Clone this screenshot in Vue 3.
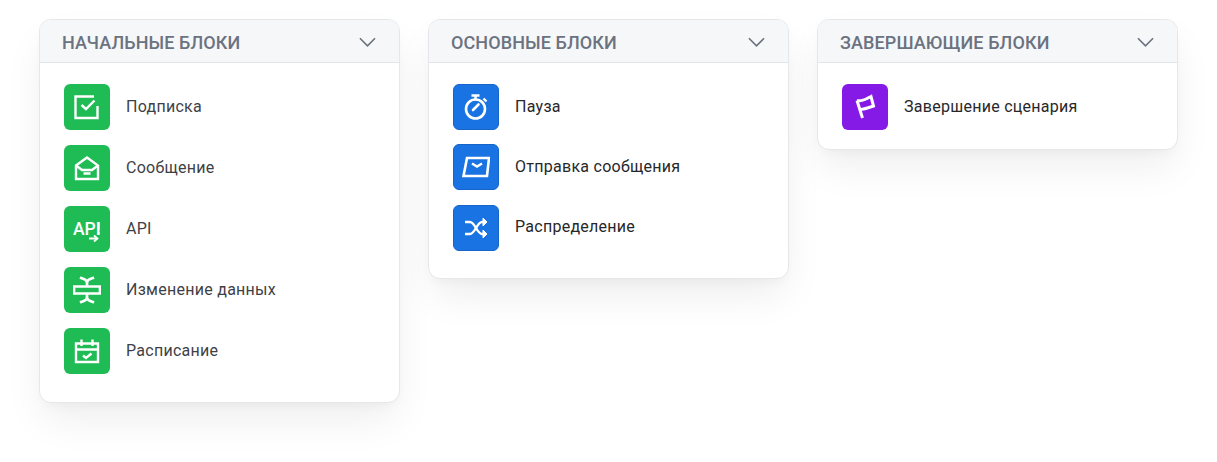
<template>
  <div class="blocks-page">
    <section v-for="group in groups" :key="group.title" class="block-card" :class="group.cls">
      <header class="card-head">
        <span class="card-title">{{ group.title }}</span>
        <svg class="chevron" width="17" height="10" viewBox="0 0 18 10" fill="none">
          <path d="M1 1 L9 9 L17 1" stroke="#6b7280" stroke-width="1.7" />
        </svg>
      </header>
      <div class="card-body">
        <div v-for="item in group.items" :key="item.name" class="block-item">
          <div class="block-icon" :class="group.color">
            <svg width="28" height="28" viewBox="0 0 28 28" fill="none" stroke="#fff" stroke-width="2.4">
              <template v-if="item.icon === 'check'">
                <path d="M21 3.5 H2.5 V25 H24.5 V13" />
                <path d="M8.5 12 L13 16 L21.5 7.5" />
              </template>
              <template v-else-if="item.icon === 'mail'">
                <path d="M3 11.5 L14 3.5 L25 11.5 V25 H3 Z" />
                <path d="M3 11.5 L9 16 H19 L25 11.5" />
                <path d="M10.5 19.5 H17.5" />
              </template>
              <template v-else-if="item.icon === 'api'">
                <text x="0" y="19.5" class="api-text" fill="#fff" stroke="none">API</text>
                <path d="M25.5 7 V15" stroke-width="2" />
                <path d="M25.5 17 V19.4" stroke-width="2" />
                <path d="M16 23.5 H24" stroke-width="2" />
                <path d="M21 20.5 L24.5 23.5 L21 26.5" stroke-width="1.8" />
              </template>
              <template v-else-if="item.icon === 'data'">
                <g stroke-width="2.7">
                  <path d="M7 1.5 C10 3 14 3 14 6.5 V10.5 M21 1.5 C18 3 14 3 14 6.5" />
                  <path d="M7 26.5 C10 25 14 25 14 21.5 V17.5 M21 26.5 C18 25 14 25 14 21.5" />
                  <path d="M1 10.5 H27 V17.5 H1 Z" />
                </g>
              </template>
              <template v-else-if="item.icon === 'calendar'">
                <path d="M3 6.5 H25 V25 H3 Z" />
                <path d="M3 12.5 H25" />
                <path d="M8.5 2.5 V9 M19.5 2.5 V9" />
                <path d="M10 18.5 L13 21 L18.5 16.5" />
              </template>
              <template v-else-if="item.icon === 'timer'">
                <circle cx="13.5" cy="16" r="9.5" stroke-width="2.6" />
                <path d="M9.5 2.5 H17.5 M13.5 2.5 V6" />
                <path d="M21.5 5.5 L24.5 8.5" />
                <path d="M11 17 L16.5 11.5" stroke-linecap="round" stroke-width="2.6" />
              </template>
              <template v-else-if="item.icon === 'send'">
                <path d="M5 5 H27 L25 23 H1.5 Z" stroke-width="2.6" />
                <path d="M10 10.5 L15 13.5 L20 10.5" />
              </template>
              <template v-else-if="item.icon === 'shuffle'">
                <path d="M3 8 H8 C13 8 15 20 20 20 H24" />
                <path d="M3 20 H8 C13 20 15 8 20 8 H24" />
                <path d="M21 4 L25 8 L21 12 Z" fill="#fff" stroke-width="1" />
                <path d="M21 16 L25 20 L21 24 Z" fill="#fff" stroke-width="1" />
              </template>
              <template v-else-if="item.icon === 'flag'">
                <path d="M11.5 25 L6 7.5" stroke-width="3" />
                <path d="M6 7.5 C10 8.5 13 7 20 3.5 L22.5 13 C17 15 12 16.5 8.8 16.5" stroke-width="3" />
              </template>
            </svg>
          </div>
          <span class="block-name" :class="{ dark: group.color !== 'green' }">{{ item.name }}</span>
        </div>
      </div>
    </section>
  </div>
</template>

<script setup>
const groups = [
  {
    title: 'Начальные блоки',
    color: 'green',
    cls: 'card-start',
    items: [
      { name: 'Подписка', icon: 'check' },
      { name: 'Сообщение', icon: 'mail' },
      { name: 'API', icon: 'api' },
      { name: 'Изменение данных', icon: 'data' },
      { name: 'Расписание', icon: 'calendar' }
    ]
  },
  {
    title: 'Основные блоки',
    color: 'blue',
    cls: 'card-main',
    items: [
      { name: 'Пауза', icon: 'timer' },
      { name: 'Отправка сообщения', icon: 'send' },
      { name: 'Распределение', icon: 'shuffle' }
    ]
  },
  {
    title: 'Завершающие блоки',
    color: 'purple',
    cls: 'card-end',
    items: [{ name: 'Завершение сценария', icon: 'flag' }]
  }
]
</script>

<style>
html, body {
  background: #fff;
}
</style>

<style scoped>
.blocks-page {
  display: flex;
  align-items: flex-start;
  gap: 29px;
  padding: 19px 0 0 39px;
  height: 462px;
  box-sizing: border-box;
  overflow: hidden;
  font-family: Roboto, "Liberation Sans", sans-serif;
}

.block-card {
  width: 361px;
  margin-right: -1px;
  flex-shrink: 0;
  box-sizing: border-box;
  background: #fff;
  border: 1px solid #e5e7eb;
  border-radius: 12px;
  box-shadow: 0 20px 40px -4px rgba(0, 0, 0, 0.07), 0 6px 12px -4px rgba(0, 0, 0, 0.04);
  overflow: hidden;
}

.card-head {
  display: flex;
  align-items: center;
  justify-content: space-between;
  height: 43px;
  box-sizing: border-box;
  padding: 2px 23px 0 22px;
  background: #f6f7f9;
  border-bottom: 1px solid #e2e5ec;
}

.card-title {
  font-size: 18px;
  letter-spacing: 0.1px;
  font-weight: 500;
  color: #6b7280;
  text-transform: uppercase;
}

.card-body {
  display: flex;
  flex-direction: column;
  padding: 21px 24px 28px;
}

.card-start .card-body {
  gap: 15px;
}

.card-main .card-body {
  gap: 14.4px;
  padding-bottom: 27.2px;
}

.card-end .card-body {
  padding-bottom: 19px;
}

.block-item {
  display: flex;
  align-items: center;
  gap: 16px;
}

.block-icon {
  width: 46px;
  height: 46px;
  flex-shrink: 0;
  display: flex;
  align-items: center;
  justify-content: center;
  border-radius: 6px;
  box-sizing: border-box;
}

.green {
  background: #1fbb55;
}

.blue {
  background: #1a73e2;
  border: 1px solid #1765c8;
}

.purple {
  background: #8519e6;
}

.block-name {
  font-size: 16px;
  letter-spacing: 0.27px;
  margin-top: -2px;
  color: #3f3f46;
}

.block-name.dark {
  color: #27272a;
}

.api-text {
  font-family: Roboto, "Liberation Sans", sans-serif;
  font-size: 17.5px;
  font-weight: 500;
}
</style>
